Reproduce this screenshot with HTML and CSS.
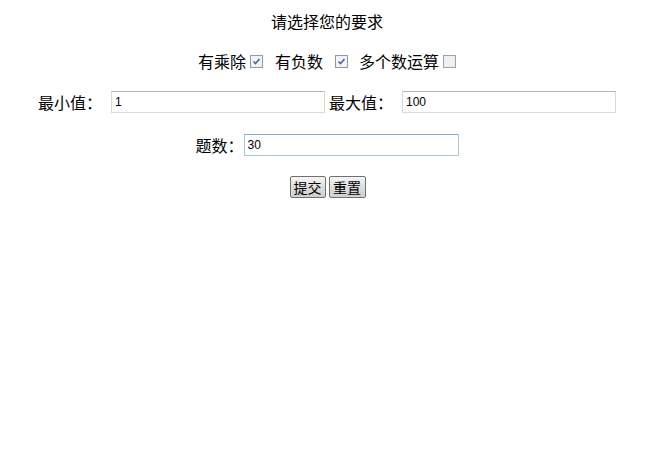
FILE: index.html
```html
<!DOCTYPE html>
<html lang="zh">
<head>
<meta charset="utf-8">
<title>请选择您的要求</title>
<link rel="stylesheet" href="styles.css">
</head>
<body>
<form class="page">
  <div class="row title">请选择您的要求</div>
  <div class="row opts">
    <span class="opt">有乘除</span>
    <span class="cb cb1"><svg viewBox="0 0 13 13" width="13" height="13"><rect x="0.5" y="0.5" width="12" height="12" fill="#eceef0" stroke="#8e9aa8"/><rect x="1.5" y="1.5" width="10" height="10" fill="#f4f5f6"/><path d="M3.5 6.5 L5.5 8.5 L9.5 4" fill="none" stroke="#4a63a8" stroke-width="1.6"/></svg></span>
    <span class="opt o2">有负数</span>
    <span class="cb cb2"><svg viewBox="0 0 13 13" width="13" height="13"><rect x="0.5" y="0.5" width="12" height="12" fill="#eceef0" stroke="#8e9aa8"/><rect x="1.5" y="1.5" width="10" height="10" fill="#f4f5f6"/><path d="M3.5 6.5 L5.5 8.5 L9.5 4" fill="none" stroke="#4a63a8" stroke-width="1.6"/></svg></span>
    <span class="opt o3">多个数运算</span>
    <span class="cb cb3"><svg viewBox="0 0 13 13" width="13" height="13"><rect x="0.5" y="0.5" width="12" height="12" fill="#e6e8ea" stroke="#9aa2ac"/><rect x="1.5" y="1.5" width="10" height="10" fill="#f0f1f2"/></svg></span>
  </div>
  <div class="row range">
    <span class="lbl">最小值：</span>
    <input class="field f1" type="text" value="1">
    <span class="lbl l2">最大值：</span>
    <input class="field f2" type="text" value="100">
  </div>
  <div class="row count">
    <span class="lbl">题数：</span>
    <input class="field f3 focus" type="text" value="30">
  </div>
  <div class="row btns">
    <button class="btn" type="button">提交</button>
    <button class="btn" type="button">重置</button>
  </div>
</form>
</body>
</html>
```
FILE: styles.css
```css
html, body {
  margin: 0;
  padding: 0;
  background: #ffffff;
}
body {
  font-family: "Noto Sans CJK SC", "Noto Sans", sans-serif;
  color: #000;
}
.page {
  width: 654px;
  display: flex;
  flex-direction: column;
  align-items: center;
}
.row {
  display: flex;
  align-items: center;
  height: 22px;
  font-size: 16px;
  line-height: 22px;
}
.title { margin-top: 10px; }
.opts { margin-top: 18px; }
.range { margin-top: 19px; }
.count { margin-top: 21px; }
.btns { margin-top: 20px; }

.cb { display: inline-flex; width: 13px; height: 13px; margin-left: 4px; }
.cb svg { display: block; }
.o2 { margin-left: 12px; }
.cb2 { margin-left: 12px; }
.o3 { margin-left: 11px; }

.lbl { white-space: nowrap; }
.range .lbl { margin-right: 9px; }
.l2 { margin-left: 4px; }

.field {
  box-sizing: border-box;
  width: 214px;
  height: 22px;
  margin: 0;
  padding: 0 3px;
  border: 1px solid #dadada;
  border-top-color: #b4b4b4;
  font-family: "Liberation Sans", Arial, sans-serif;
  font-size: 12px;
  color: #000;
  background: #fff;
  outline: none;
}
.f3 { width: 215px; }
.focus {
  border-color: #a9c8e6;
  border-top-color: #86a9cf;
}

.btn {
  box-sizing: border-box;
  height: 22px;
  width: 37px;
  margin: 0 0 0 3px;
  padding: 0;
  border: 1px solid #707070;
  border-radius: 2px;
  background: linear-gradient(#f6f6f6, #dedede 50%, #cfcfcf);
  font-family: "Noto Sans CJK SC", sans-serif;
  font-size: 14px;
  line-height: 20px;
  color: #000;
}
.btn:first-child { margin-left: 1px; width: 36px; }
```
